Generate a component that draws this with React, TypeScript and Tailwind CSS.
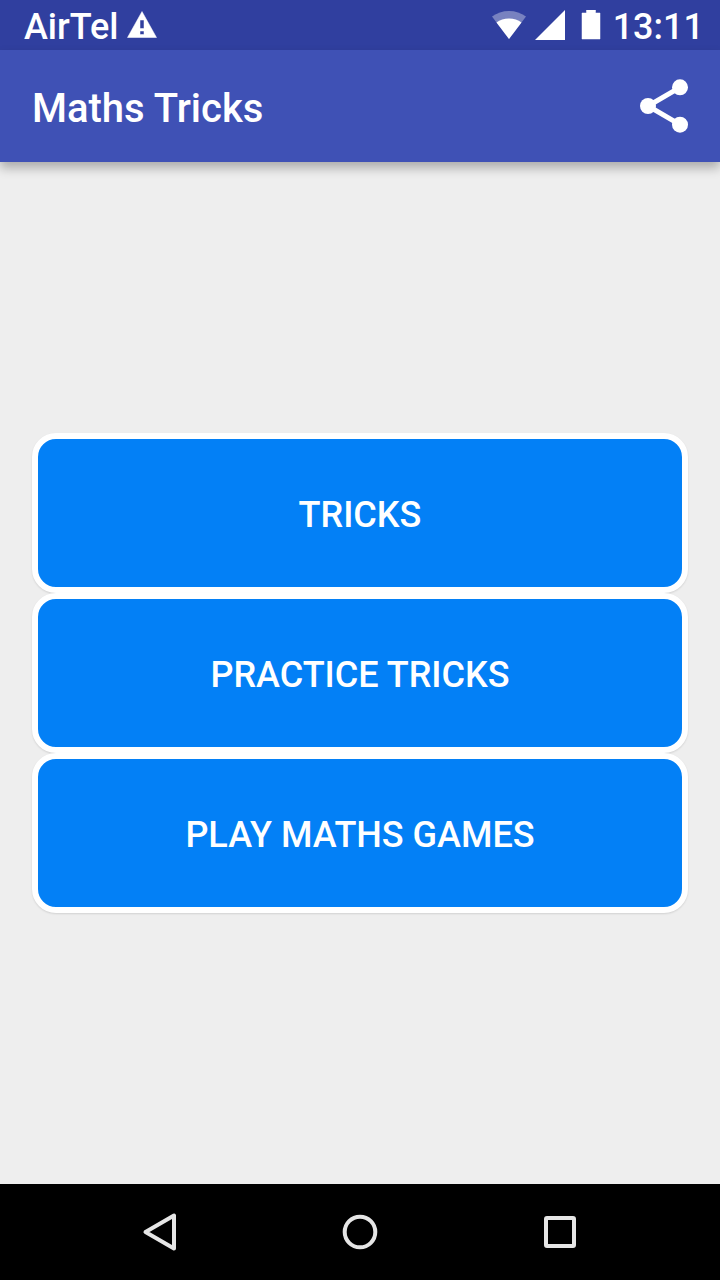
import type { ReactNode } from "react";

const menuItems = ["Tricks", "Practice Tricks", "Play Maths Games"];

function WarningIcon() {
  return (
    <svg width="30" height="30" viewBox="0 0 30 30" aria-hidden="true">
      <path
        fill="white"
        fillRule="evenodd"
        d="M15 1.500 29.500 27.500H.5zM13 10v8.500h4V10zM13 21v3.500h4V21z"
        stroke="white"
        strokeWidth="0.5"
        strokeLinejoin="round"
      />
    </svg>
  );
}

function WifiIcon() {
  return (
    <svg width="36" height="30" viewBox="0 0 36 30" aria-hidden="true">
      <path fill="white" fillOpacity="0.35" d="M18 29 1 6.500C6 3 11.500 1 18 1s12 2 17 5.500z" />
      <path fill="white" d="M18 29 5.500 12.500C9 10 13 8.500 18 8.500s9 1.500 12.500 4z" />
    </svg>
  );
}

function SignalIcon() {
  return (
    <svg width="30" height="30" viewBox="0 0 30 30" aria-hidden="true">
      <path fill="white" d="M30 0v30H0z" />
    </svg>
  );
}

function BatteryIcon() {
  return (
    <svg width="20" height="30" viewBox="0 0 20 30" aria-hidden="true">
      <path fill="white" d="M5.500 0h9v3H19v26H1V3h4.500z" stroke="white" strokeOpacity="0.5" />
    </svg>
  );
}

function ShareIcon() {
  return (
    <svg width="48" height="54" viewBox="0 0 48 54" aria-hidden="true">
      <path d="M40 8.300 8 27l32 18.700" fill="none" stroke="white" strokeWidth="5" />
      <circle cx="40" cy="8.300" r="8" fill="white" />
      <circle cx="8" cy="27" r="8" fill="white" />
      <circle cx="40" cy="45.700" r="8" fill="white" />
    </svg>
  );
}

function NavButton({ label, children }: { label: string; children: ReactNode }) {
  return (
    <button type="button" aria-label={label} className="flex h-full w-[200px] items-center justify-center">
      <svg
        width="48"
        height="48"
        viewBox="0 0 48 48"
        fill="none"
        stroke="#e6e6e6"
        strokeWidth="4"
        strokeLinejoin="round"
        aria-hidden="true"
      >
        {children}
      </svg>
    </button>
  );
}

export default function App() {
  return (
    <div className="flex min-h-screen flex-col bg-[#eeeeee] font-['Roboto',sans-serif] font-medium text-white">
      <div className="flex h-[50px] items-center justify-between bg-[#303f9f] pl-6 pr-4 text-4xl">
        <div className="flex items-center gap-2">
          <span className="pt-1">AirTel</span>
          <WarningIcon />
        </div>
        <div className="flex items-center">
          <WifiIcon />
          <span className="ml-2">
            <SignalIcon />
          </span>
          <span className="ml-4">
            <BatteryIcon />
          </span>
          <span className="ml-3 pt-1">13:11</span>
        </div>
      </div>

      <header className="flex h-28 items-center justify-between bg-[#3f51b5] px-8 shadow-[0_6px_10px_rgba(0,0,0,0.28)]">
        <h1 className="pt-1.5 text-[40px]">Maths Tricks</h1>
        <button type="button" aria-label="Share">
          <ShareIcon />
        </button>
      </header>

      <main className="flex flex-1 flex-col justify-center px-8">
        {menuItems.map((item) => (
          <button
            key={item}
            type="button"
            className="h-40 rounded-3xl border-6 border-white bg-[#0380f6] pt-1 text-4xl uppercase shadow-[0_1px_2px_rgba(0,0,0,0.12)]"
          >
            {item}
          </button>
        ))}
      </main>

      <nav className="flex h-24 justify-center bg-black">
        <NavButton label="Back">
          <path d="M9.500 24 38 7.500v33z" />
        </NavButton>
        <NavButton label="Home">
          <circle cx="24" cy="24" r="15.300" />
        </NavButton>
        <NavButton label="Recent apps">
          <rect x="10" y="10" width="28" height="28" rx="1" />
        </NavButton>
      </nav>
    </div>
  );
}
